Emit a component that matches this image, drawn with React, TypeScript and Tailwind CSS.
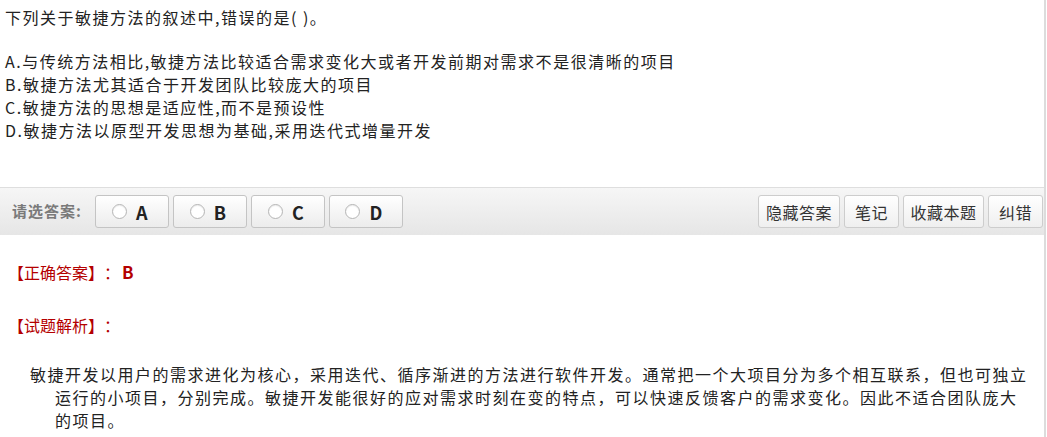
import React from "react";

const font = { fontFamily: '"Noto Sans CJK SC", "Noto Sans", sans-serif' };

const options = [
  "A.与传统方法相比,敏捷方法比较适合需求变化大或者开发前期对需求不是很清晰的项目",
  "B.敏捷方法尤其适合于开发团队比较庞大的项目",
  "C.敏捷方法的思想是适应性,而不是预设性",
  "D.敏捷方法以原型开发思想为基础,采用迭代式增量开发",
];

function Choice({ letter }: { letter: string }) {
  return (
    <button className="flex h-[33px] w-[74px] items-center justify-center gap-[9px] rounded-[3px] border border-[#c4c4c4] bg-gradient-to-b from-white to-[#ececec] pr-1">
      <span className="h-[15px] w-[15px] rounded-full border border-[#b5b5b5] bg-white shadow-[inset_0_1px_1px_rgba(0,0,0,0.08)]" />
      <span className="text-[18px] font-bold leading-none text-[#222]">{letter}</span>
    </button>
  );
}

function ToolButton({ label, w }: { label: string; w: string }) {
  return (
    <button
      className={`flex h-[33px] ${w} items-center justify-center rounded-[3px] border border-[#cdcdcd] bg-gradient-to-b from-white to-[#efefef] text-[16px] tracking-[0.5px] text-[#333]`}
    >
      {label}
    </button>
  );
}

export default function App() {
  return (
    <div className="h-[437px] w-[1047px] overflow-hidden bg-white" style={font}>
      <div className="h-full w-[1046px] border-r-2 border-[#dcdcdc]">
        <div className="h-[187px] pl-[5px] pt-[6px] text-[16px] leading-[23px] tracking-[1.5px] text-[#222]">
          <p>下列关于敏捷方法的叙述中,错误的是( )。</p>
          <p className="h-[21px]" />
          {options.map((o) => (
            <p key={o}>{o}</p>
          ))}
        </div>

        <div className="flex h-[48px] items-start border-t border-[#dedede] bg-gradient-to-b from-[#f6f6f6] to-[#e6e6e6] pt-[7px]">
          <span className="ml-[12px] mr-[13px] flex h-[33px] items-center text-[15px] font-bold tracking-[1px] text-[#7a7a7a]">
            请选答案:
          </span>
          <div className="flex gap-[4px]">
            {["A", "B", "C", "D"].map((l) => (
              <Choice key={l} letter={l} />
            ))}
          </div>
          <div className="ml-auto mr-[1px] flex gap-[4px]">
            <ToolButton label="隐藏答案" w="w-[82px]" />
            <ToolButton label="笔记" w="w-[55px]" />
            <ToolButton label="收藏本题" w="w-[81px]" />
            <ToolButton label="纠错" w="w-[55px]" />
          </div>
        </div>

        <div className="pl-[8px] pt-[25px] text-[16px] leading-[23px]">
          <p className="text-[#b40000]">
            【正确答案】<span className="ml-[8px]">：</span>
            <span className="ml-[2px] text-[17px] font-bold">B</span>
          </p>
          <p className="mt-[30px] text-[#b40000]">
            【试题解析】<span className="ml-[8px]">：</span>
          </p>
          <p
            className="mt-[26px] whitespace-nowrap pl-[55px] text-[16px] leading-[23px] tracking-[1.5px] text-[#222] [text-indent:-25px]"
            style={{ marginLeft: -8 }}
          >
            敏捷开发以用户的需求进化为核心，采用迭代、循序渐进的方法进行软件开发。通常把一个大项目分为多个相互联系，但也可独立
            <br />
            运行的小项目，分别完成。敏捷开发能很好的应对需求时刻在变的特点，可以快速反馈客户的需求变化。因此不适合团队庞大
            <br />
            的项目。
          </p>
        </div>
      </div>
    </div>
  );
}
